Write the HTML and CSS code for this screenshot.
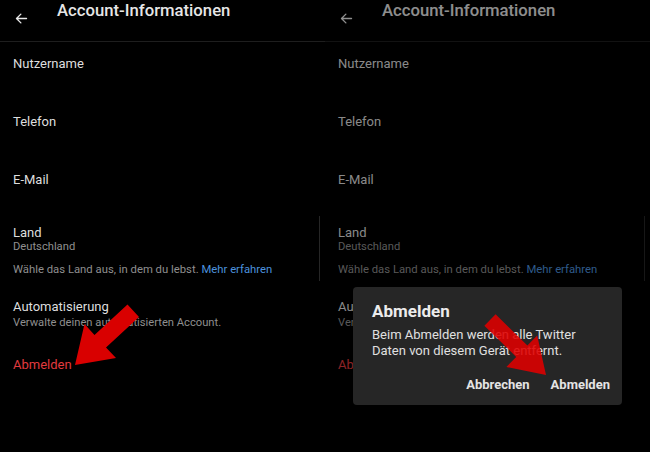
FILE: index.html
```html
<!DOCTYPE html>
<html lang="de">

<head>
    <meta charset="UTF-8">
    <meta name="viewport" content="width=device-width, initial-scale=1.0">
    <title>Account-Informationen</title>
    <link rel="stylesheet" href="styles.css">
</head>

<body>
    <div class="screens">
        <!-- linke Seite: normale Ansicht -->
        <div class="screen">
            <div class="header">
                <svg class="back" viewBox="0 0 24 24" width="15" height="15">
                    <path d="M20 12H5M11 5l-7 7 7 7" fill="none" stroke="#e8e8e8" stroke-width="2.2" stroke-linecap="round" stroke-linejoin="round"/>
                </svg>
                <div class="title">Account-Informationen</div>
            </div>
            <div class="row">Nutzername</div>
            <div class="row">Telefon</div>
            <div class="row">E-Mail</div>
            <div class="country">
                <div class="label">Land</div>
                <div class="sub">Deutschland</div>
                <div class="hint">Wähle das Land aus, in dem du lebst. <span class="link">Mehr erfahren</span></div>
            </div>
            <div class="auto">
                <div class="label">Automatisierung</div>
                <div class="sub">Verwalte deinen automatisierten Account.</div>
            </div>
            <div class="logout">Abmelden</div>
        </div>

        <!-- rechte Seite: mit Dialog -->
        <div class="screen">
            <div class="header">
                <svg class="back" viewBox="0 0 24 24" width="15" height="15">
                    <path d="M20 12H5M11 5l-7 7 7 7" fill="none" stroke="#e8e8e8" stroke-width="2.2" stroke-linecap="round" stroke-linejoin="round"/>
                </svg>
                <div class="title">Account-Informationen</div>
            </div>
            <div class="row">Nutzername</div>
            <div class="row">Telefon</div>
            <div class="row">E-Mail</div>
            <div class="country">
                <div class="label">Land</div>
                <div class="sub">Deutschland</div>
                <div class="hint">Wähle das Land aus, in dem du lebst. <span class="link">Mehr erfahren</span></div>
            </div>
            <div class="auto">
                <div class="label">Automatisierung</div>
                <div class="sub">Verwalte deinen automatisierten Account.</div>
            </div>
            <div class="logout">Abmelden</div>

            <div class="scrim"></div>
            <div class="dialog">
                <div class="dialog-title">Abmelden</div>
                <div class="dialog-text">Beim Abmelden werden alle Twitter<br>Daten von diesem Gerät entfernt.</div>
                <div class="dialog-actions">
                    <span>Abbrechen</span>
                    <span>Abmelden</span>
                </div>
            </div>
        </div>
    </div>

    <!-- rote Markierungspfeile -->
    <svg class="arrows" viewBox="0 0 650 452" width="650" height="452">
        <polygon fill="#d90000" points="75,365 116,358 106,347.5 139,317 127.5,304.5 94.5,335 84.5,324"/>
        <polygon fill="#e00000" fill-opacity="0.88" points="546,375 506.4,366.9 516.2,356.9 484.4,325.7 495.6,314.3 527.4,345.5 537.2,335.5"/>
    </svg>
</body>

</html>
```

FILE: styles.css
```css
* {
    box-sizing: border-box;
}

body {
    margin: 0;
    padding: 0;
    background-color: #000000;
    font-family: Roboto, "Liberation Sans", sans-serif;
    color: #dedede;
    width: 650px;
    height: 452px;
    overflow: hidden;
    position: relative;
}

.screens {
    display: flex;
}

.screen {
    width: 325px;
    height: 452px;
    position: relative;
}

.header {
    display: flex;
    align-items: flex-start;
    height: 42px;
    border-bottom: 1px solid #1e1e1e;
}

.back {
    margin: 11px 0 0 14px;
}

.title {
    margin: 1px 0 0 28px;
    font-size: 16.7px;
    line-height: 20px;
    font-weight: 500;
    color: #e6e6e6;
}

.row {
    padding: 14px 13px 28px;
    font-size: 13px;
    line-height: 16px;
}

.country {
    margin: 0 5px 0 13px;
    padding: 9px 0 4px;
    border-right: 1px solid #262626;
}

.label {
    font-size: 13px;
    line-height: 15px;
}

.sub {
    font-size: 11.2px;
    line-height: 14px;
    color: #8f8f8f;
}

.hint {
    margin-top: 9px;
    font-size: 11.3px;
    line-height: 14px;
    color: #8f8f8f;
}

.link {
    color: #4c92de;
}

.auto {
    padding: 18px 13px 0;
}

.auto .label {
    line-height: 16px;
}

.auto .sub {
    margin-top: 1px;
}

.logout {
    margin-top: 27px;
    padding: 0 13px;
    font-size: 13px;
    line-height: 16px;
    color: #e23a3f;
}

.scrim {
    position: absolute;
    top: 0;
    left: 0;
    right: 0;
    bottom: 0;
    background-color: rgba(0, 0, 0, 0.38);
}

.dialog {
    position: absolute;
    top: 287px;
    left: 28px;
    width: 269px;
    height: 118px;
    padding: 14px 12px 12px 19px;
    background-color: #262626;
    border-radius: 4px;
}

.dialog-title {
    font-size: 17px;
    line-height: 20px;
    font-weight: 700;
    color: #ececec;
}

.dialog-text {
    margin-top: 6px;
    font-size: 13px;
    line-height: 16px;
    color: #e0e0e0;
}

.dialog-actions {
    margin-top: 18px;
    display: flex;
    justify-content: flex-end;
    gap: 21px;
    font-size: 13px;
    line-height: 16px;
    font-weight: 700;
    color: #e4e4e4;
}

.arrows {
    position: absolute;
    top: 0;
    left: 0;
    pointer-events: none;
}
```
